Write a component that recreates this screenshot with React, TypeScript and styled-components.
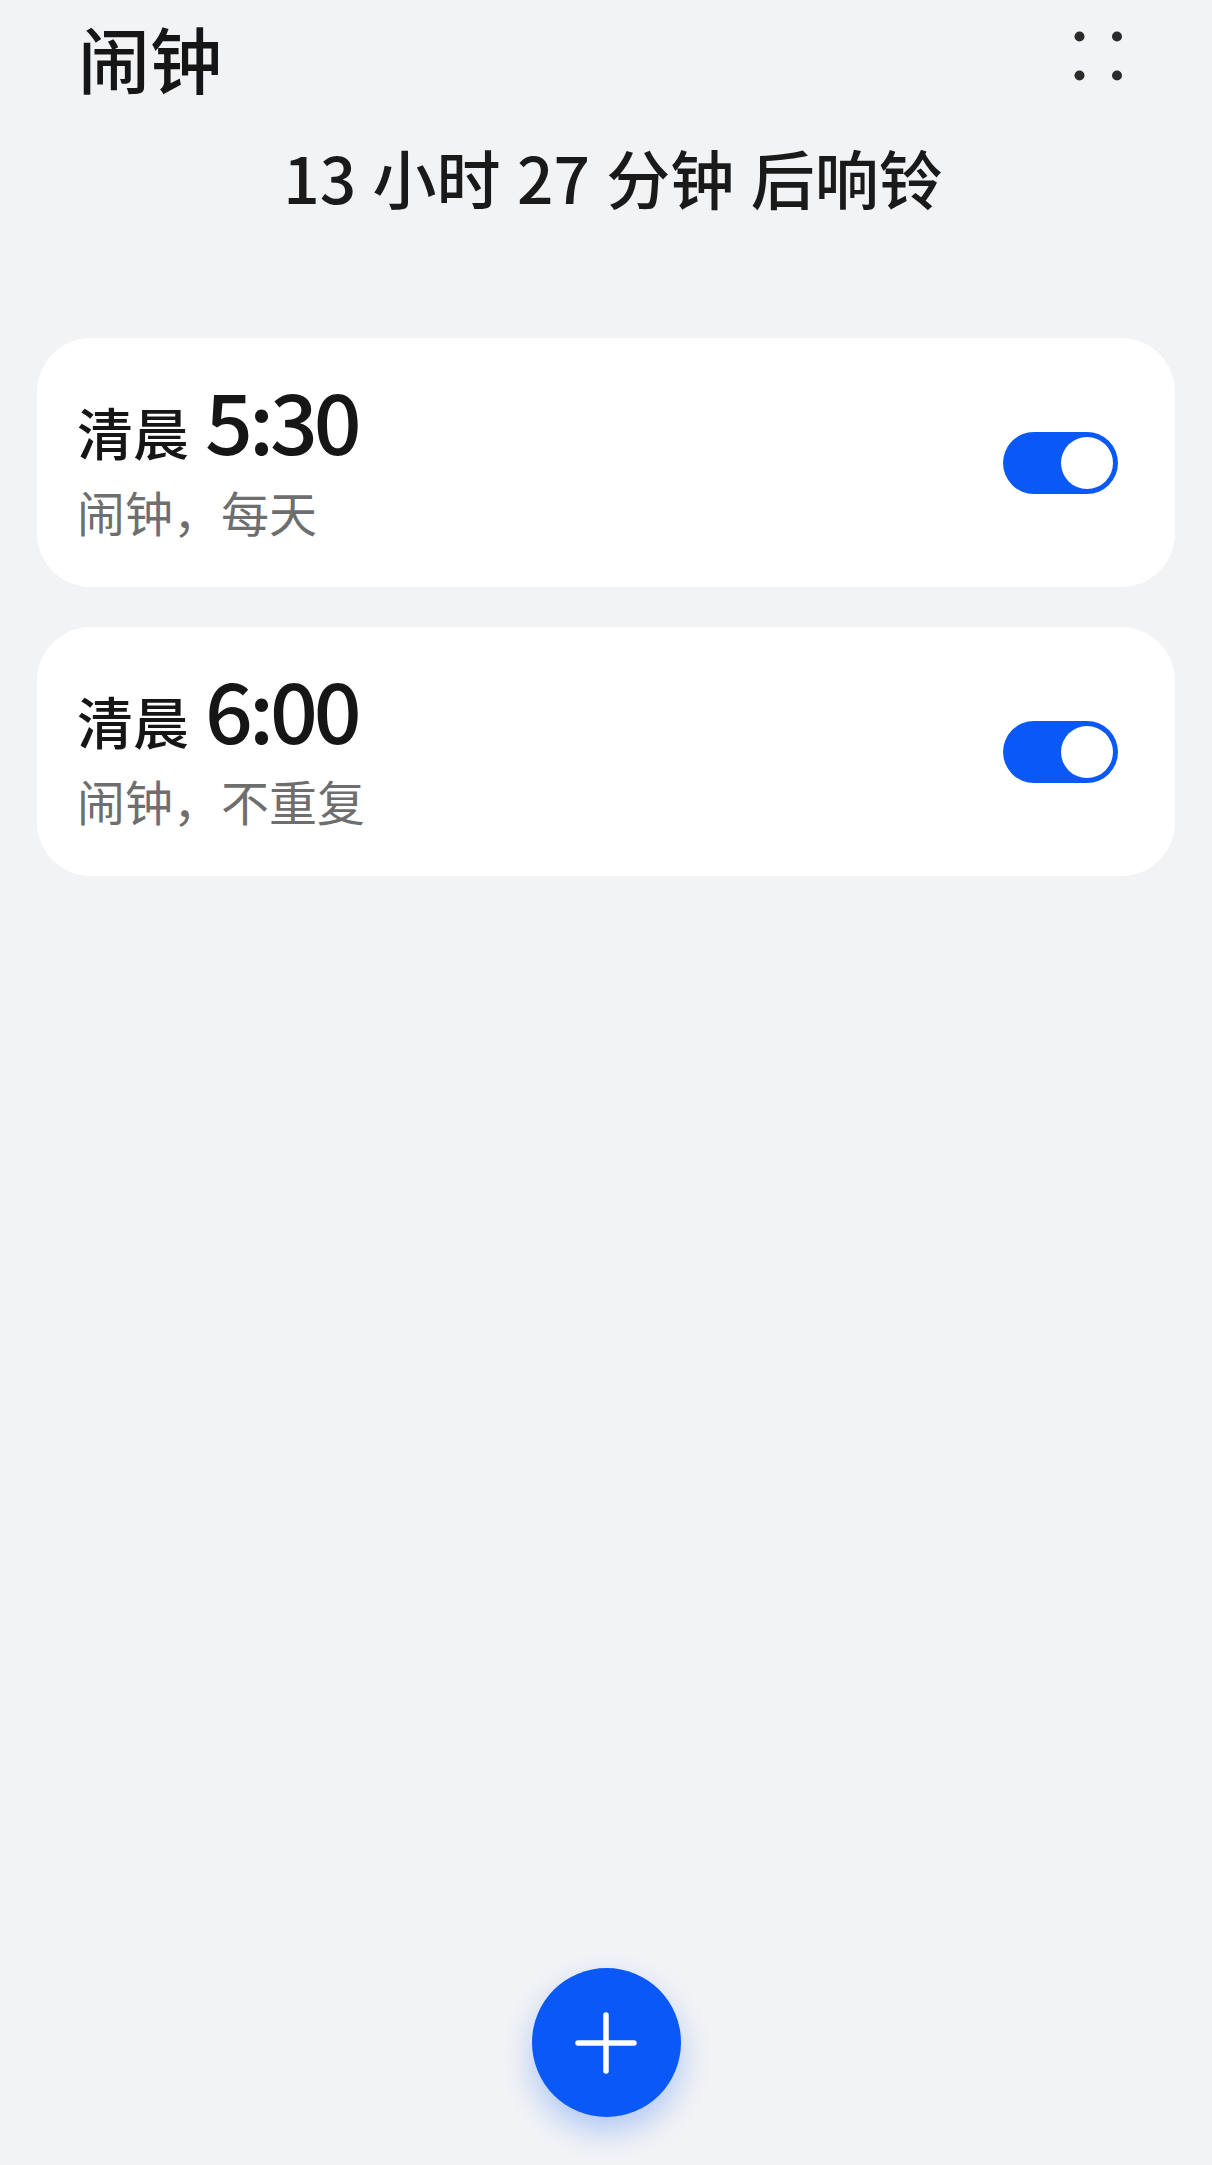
import React from "react"
import styled, {createGlobalStyle} from "styled-components"

const GlobalStyle = createGlobalStyle`
  html, body {
    margin: 0;
    padding: 0;
    background: #f1f3f5;
  }
  body {
    font-family: "Noto Sans CJK SC", "Noto Sans", sans-serif;
    color: #191919;
  }
`

type Alarm = { id: number, period: string, time: string, note: string, on: boolean }

const alarms: Alarm[] = [
    {id: 1, period: "清晨", time: "5:30", note: "闹钟，每天", on: true},
    {id: 2, period: "清晨", time: "6:00", note: "闹钟，不重复", on: true},
]

function MoreIcon() {
    return (
        <svg width="48" height="50" viewBox="0 0 48 50">
            <circle cx="5.5" cy="5.5" r="5" fill="#2b2b2b"/>
            <circle cx="43" cy="5.5" r="5" fill="#2b2b2b"/>
            <circle cx="5.5" cy="44.5" r="5" fill="#2b2b2b"/>
            <circle cx="43" cy="44.5" r="5" fill="#2b2b2b"/>
        </svg>
    )
}

function PlusIcon() {
    return (
        <svg width="62" height="62" viewBox="0 0 62 62">
            <path d="M31 3 V59 M3 31 H59" stroke="#fff" strokeWidth="5.5" strokeLinecap="round"/>
        </svg>
    )
}

export default function App() {
    return (
        <>
            <GlobalStyle/>
            <Page>
                <Header>
                    <Title>闹钟</Title>
                    <MoreButton><MoreIcon/></MoreButton>
                </Header>
                <Countdown>13 小时 27 分钟 后响铃</Countdown>
                <List>
                    {alarms.map(a => (
                        <Card key={a.id}>
                            <Info>
                                <TimeLine>
                                    <Period>{a.period}</Period>
                                    <Time>{a.time}</Time>
                                </TimeLine>
                                <Note>{a.note}</Note>
                            </Info>
                            <Switch $on={a.on}><Knob/></Switch>
                        </Card>
                    ))}
                </List>
                <Fab><PlusIcon/></Fab>
            </Page>
        </>
    )
}

const Page = styled.div`
  display: flex;
  flex-direction: column;
  height: 2165px;
  box-sizing: border-box;
`
const Header = styled.div`
  display: flex;
  justify-content: space-between;
  align-items: flex-start;
  padding: 14px 90px 0 78px;
`
const Title = styled.div`
  font-size: 72px;
  font-weight: 500;
  line-height: 1.2;
  color: #161616;
`
const MoreButton = styled.div`
  margin-top: 17px;
  display: flex;
`
const Countdown = styled.div`
  margin-top: 38px;
  padding-left: 14px;
  text-align: center;
  font-size: 64px;
  font-weight: 500;
  word-spacing: 2px;
  line-height: 1.2;
  color: #1a1a1a;
`
const List = styled.div`
  display: flex;
  flex-direction: column;
  gap: 40px;
  padding: 0 37px;
  margin-top: 123px;
`
const Card = styled.div`
  height: 249px;
  box-sizing: border-box;
  background: #fff;
  border-radius: 54px;
  padding: 0 57px 0 40px;
  display: flex;
  align-items: center;
  justify-content: space-between;
`
const Info = styled.div`
  display: flex;
  flex-direction: column;
  margin-top: -5px;
`
const TimeLine = styled.div`
  display: flex;
  align-items: baseline;
  gap: 16px;
  line-height: 1;
`
const Period = styled.span`
  font-size: 56px;
  font-weight: 500;
  color: #161616;
`
const Time = styled.span`
  font-size: 84px;
  font-weight: 500;
  letter-spacing: -4px;
  color: #161616;
`
const Note = styled.div`
  margin-top: 19px;
  font-size: 48px;
  line-height: 1.3;
  color: #6e6e6e;
`
const Switch = styled.div<{ $on: boolean }>`
  width: 115px;
  height: 62px;
  border-radius: 31px;
  background: ${p => p.$on ? "#0a59f7" : "#d5d5d5"};
  display: flex;
  align-items: center;
  justify-content: ${p => p.$on ? "flex-end" : "flex-start"};
  padding: 0 5px;
  box-sizing: border-box;
`
const Knob = styled.div`
  width: 52px;
  height: 52px;
  border-radius: 50%;
  background: #fff;
`
const Fab = styled.div`
  margin: auto auto 48px;
  width: 149px;
  height: 149px;
  border-radius: 50%;
  background: #0a59f7;
  box-shadow: 0 14px 30px rgba(10, 89, 247, 0.28);
  display: flex;
  align-items: center;
  justify-content: center;
`
